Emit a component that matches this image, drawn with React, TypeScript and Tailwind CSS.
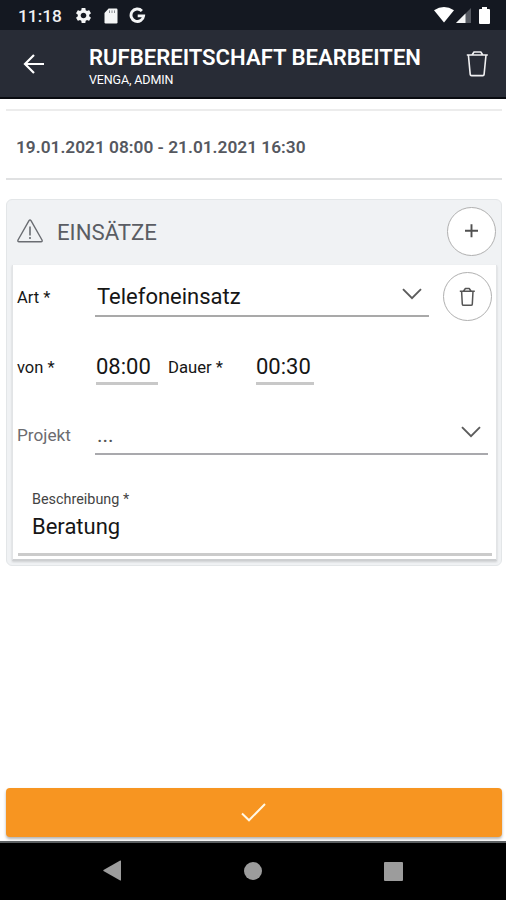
import clsx from "clsx";

const GearIcon = () => (
  <svg width="19" height="19" viewBox="0 0 24 24" fill="#f4f5f6">
    <path d="M19.14 12.94c.04-.3.06-.61.06-.94 0-.32-.02-.64-.07-.94l2.03-1.58c.18-.14.23-.41.12-.61l-1.92-3.32c-.12-.22-.37-.29-.59-.22l-2.39.96c-.5-.38-1.03-.7-1.62-.94l-.36-2.54c-.04-.24-.24-.41-.48-.41h-3.84c-.24 0-.43.17-.47.41l-.36 2.54c-.59.24-1.13.57-1.62.94l-2.39-.96c-.22-.08-.47 0-.59.22L2.74 8.87c-.12.21-.08.47.12.61l2.03 1.58c-.05.3-.09.63-.09.94s.02.64.07.94l-2.03 1.58c-.18.14-.23.41-.12.61l1.92 3.32c.12.22.37.29.59.22l2.39-.96c.5.38 1.03.7 1.62.94l.36 2.54c.05.24.24.41.48.41h3.84c.24 0 .44-.17.47-.41l.36-2.54c.59-.24 1.13-.56 1.62-.94l2.39.96c.22.08.47 0 .59-.22l1.92-3.32c.12-.22.07-.47-.12-.61l-2.01-1.58zM12 15.6c-1.98 0-3.6-1.62-3.6-3.6s1.62-3.6 3.6-3.6 3.6 1.62 3.6 3.6-1.62 3.6-3.6 3.6z" />
  </svg>
);

const SdIcon = () => (
  <svg width="14" height="16" viewBox="0 0 14 16">
    <path d="M4.6 .5H12.3Q13.5 .5 13.5 1.7V14.3Q13.5 15.5 12.3 15.5H1.7Q.5 15.5 .5 14.3V4.9Z" fill="#f4f5f6" />
    <path d="M5.5 2.4V5M8 2.4V5M10.5 2.4V5" stroke="#8b8e94" strokeWidth="1" />
  </svg>
);

const GoogleIcon = () => (
  <svg width="17" height="17" viewBox="0 0 17 17" fill="none">
    <path d="M12.9 3.9A6.3 6.3 0 1 0 14.6 8.9H8.7" stroke="#f4f5f6" strokeWidth="2.9" />
  </svg>
);

const BackArrow = () => (
  <svg width="22" height="20" viewBox="0 0 22 20" fill="none" stroke="#fff" strokeWidth="2.2">
    <path d="M21 10H2M11 1L2 10L11 19" />
  </svg>
);

const BigTrash = () => (
  <svg width="23" height="28" viewBox="0 0 23 28" fill="none" stroke="#f0f0f2" strokeWidth="1.6" strokeLinejoin="round">
    <path d="M.8 5H21.8M2.4 5L4.2 24.4Q4.3 25.6 5.5 25.6H16.8Q18 25.6 18.1 24.4L20 5M6.2 4.8L8 2H14.8L16.6 4.8" />
  </svg>
);

const SmallTrash = () => (
  <svg width="17" height="20" viewBox="0 0 17 20" fill="none" stroke="#555" strokeWidth="1.5" strokeLinejoin="round">
    <path d="M.8 4.2H15.8M2.6 4.2L3.3 17.1Q3.4 18.3 4.6 18.3H12Q13.2 18.3 13.3 17.1L14 4.2M4.6 4L6.4 1.5H10.2L12 4" />
  </svg>
);

const Warning = () => (
  <svg width="27" height="24" viewBox="0 0 27 24" fill="none" stroke="#6a6d72" strokeWidth="1.4" strokeLinejoin="round">
    <path d="M12 1.7Q13 .3 14 1.7L25 21Q25.6 22.7 24 22.7H2Q.5 22.7 1 21Z" />
    <path d="M13 7.5V16.5M13 18V20" strokeWidth="1.6" />
  </svg>
);

const Chevron = () => (
  <svg width="20" height="12" viewBox="0 0 20 12" fill="none" stroke="#5c5c5c" strokeWidth="1.9">
    <path d="M1 1.2L10 10.2L19 1.2" />
  </svg>
);

function StatusBar() {
  return (
    <div className="flex h-[30px] items-center bg-[#141821] pr-[16px] pl-[18px] text-[#f0f1f3]">
      <span className="w-[44px] whitespace-nowrap pt-[3px] text-[17.3px] leading-none font-medium">11:18</span>
      <div className="ml-[12px] flex flex-1 items-center gap-[11px] pt-px">
        <GearIcon />
        <SdIcon />
        <GoogleIcon />
      </div>
      <div className="flex items-center">
        <svg width="20" height="16" viewBox="0 0 20 16">
          <path d="M0 3.2Q10 -3 20 3.2L10 15.5Z" fill="#fff" />
        </svg>
        <svg className="ml-[2px]" width="16" height="16" viewBox="0 0 16 16">
          <path d="M15 1V16H0Z" fill="#555961" />
          <path d="M9.5 6.5V16H0Z" fill="#f4f5f6" />
        </svg>
        <svg className="ml-[7px]" width="11" height="17" viewBox="0 0 11 17">
          <path d="M3 0H8V2H10Q11 2 11 3V16Q11 17 10 17H1Q0 17 0 16V3Q0 2 1 2H3Z" fill="#fff" />
        </svg>
      </div>
    </div>
  );
}

function Header() {
  return (
    <div className="flex h-[69px] border-b-2 border-[#090b10] bg-[#282c36] pr-[17px] pl-[23px] text-white">
      <div className="w-[66px] pt-[24px]">
        <BackArrow />
      </div>
      <div className="flex-1 whitespace-nowrap">
        <div className="mt-[15px] text-[22.1px] leading-[25px] font-semibold">RUFBEREITSCHAFT BEARBEITEN</div>
        <div className="mt-[2px] text-[12.5px] leading-[15px] tracking-[-0.13px]">VENGA, ADMIN</div>
      </div>
      <div className="pt-[20px]">
        <BigTrash />
      </div>
    </div>
  );
}

function RoundButton({ children, className }: { children: any; className?: string }) {
  return (
    <button className={clsx("flex size-[49px] shrink-0 items-center justify-center rounded-full border border-[#b0b0b0] bg-white", className)}>
      {children}
    </button>
  );
}

function TimeField({ value, className }: { value: string; className?: string }) {
  return (
    <div className={clsx("h-[34px] border-b-[3px] border-[#c8c8c8] text-[22px] leading-[32px] whitespace-nowrap", className)}>
      {value}
    </div>
  );
}

function EntryCard() {
  return (
    <div className="mr-[4px] ml-[5px] h-[296px] border-x border-b-2 border-x-[#e2e4e6] border-b-[#cdcfd1] bg-white pl-[5px] text-[#161616] shadow-[0_1px_2px_rgba(0,0,0,0.15)]">
      <div className="flex h-[67px]">
        <label className="-ml-px w-[78px] pt-[23px] text-[16.5px] leading-[20px]">Art *</label>
        <div className="mt-[14px] flex h-[38px] w-[334px] justify-between border-b-2 border-[#a9a9a9] pr-[7px] pl-[2px]">
          <span className="text-[22px] leading-[36px]">Telefoneinsatz</span>
          <div className="pt-[9px]"><Chevron /></div>
        </div>
        <RoundButton className="mt-[7px] ml-[14px]">
          <SmallTrash />
        </RoundButton>
      </div>

      <div className="flex h-[70px] pt-[19px]">
        <label className="-ml-px w-[79px] pt-[7px] text-[16.5px] leading-[20px]">von *</label>
        <TimeField value="08:00" className="w-[62px]" />
        <label className="ml-[10px] w-[88px] pt-[7px] text-[16.7px] leading-[20px]">Dauer *</label>
        <TimeField value="00:30" className="w-[58px]" />
      </div>

      <div className="flex h-[85px] pt-[16px]">
        <label className="-ml-px w-[78px] pt-[6px] text-[17.2px] leading-[22px] text-[#6c6c70]">Projekt</label>
        <div className="flex h-[37px] w-[393px] justify-between border-b-2 border-[#a9a9ad] pr-[7px] pl-[2px]">
          <span className="pt-[5px] text-[21px] leading-[24px] text-[#555]">...</span>
          <div className="pt-[8px]"><Chevron /></div>
        </div>
      </div>

      <div className="h-[69px] w-[474px] border-b-[3px] border-[#cbcbcb] pt-[4px] pl-[14px]">
        <div className="text-[14.4px] leading-[18px] text-[#444]">Beschreibung *</div>
        <div className="mt-[4px] text-[22px] leading-[28px]">Beratung</div>
      </div>
    </div>
  );
}

export default function App() {
  return (
    <div className="flex h-[900px] w-[506px] flex-col overflow-hidden bg-white font-['Roboto',sans-serif]">
      <StatusBar />
      <Header />

      <div className="mt-[10px] mr-[4px] ml-[6px] flex h-[71px] items-center border-y-2 border-t-[#ececec] border-b-[#e0e1e2] pt-[6px] pl-[10px] text-[17.3px] font-semibold text-[#55585f]">
        19.01.2021 08:00 - 21.01.2021 16:30
      </div>

      <div className="mt-[19px] mr-[4px] ml-[6px] h-[367px] rounded-[6px] border border-[#e3e6e8] bg-[#f0f2f4]">
        <div className="flex h-[65px] items-center pr-[5px] pl-[10px]">
          <div className="mb-[4px]"><Warning /></div>
          <span className="ml-[13px] flex-1 text-[22.2px] text-[#5a5d63]">EINSÄTZE</span>
          <RoundButton className="mb-[3px]">
            <svg width="14" height="14" viewBox="0 0 14 14" stroke="#505050" strokeWidth="1.9">
              <path d="M6.5 .2V13.2M0 6.7H13" />
            </svg>
          </RoundButton>
        </div>
        <EntryCard />
      </div>

      <div className="flex-1" />

      <button className="mr-[4px] ml-[6px] flex h-[49px] items-center justify-center rounded-[4px] bg-[#f79521] pr-[2px] shadow-[0_2px_3px_rgba(0,0,0,0.3)]">
        <svg width="25" height="19" viewBox="0 0 25 19" fill="none" stroke="#fff8e6" strokeWidth="2">
          <path d="M1 10.5L8 17.3L24 1" />
        </svg>
      </button>

      <div className="mt-[4px] flex h-[59px] border-t-2 border-[#5c6062] bg-black pl-[103px] text-[#9c9c9c]">
        <svg className="mt-[17px]" width="18" height="21" viewBox="0 0 18 21" fill="currentColor">
          <path d="M17.2 .5Q18 .3 18 1V20Q18 20.7 17.2 20.5L.5 11Q0 10.5 .5 10Z" />
        </svg>
        <div className="mt-[19px] ml-[123px] size-[18px] rounded-full bg-[#9c9c9c]" />
        <div className="mt-[19px] ml-[122px] size-[19px] rounded-[1px] bg-[#9c9c9c]" />
      </div>
    </div>
  );
}
